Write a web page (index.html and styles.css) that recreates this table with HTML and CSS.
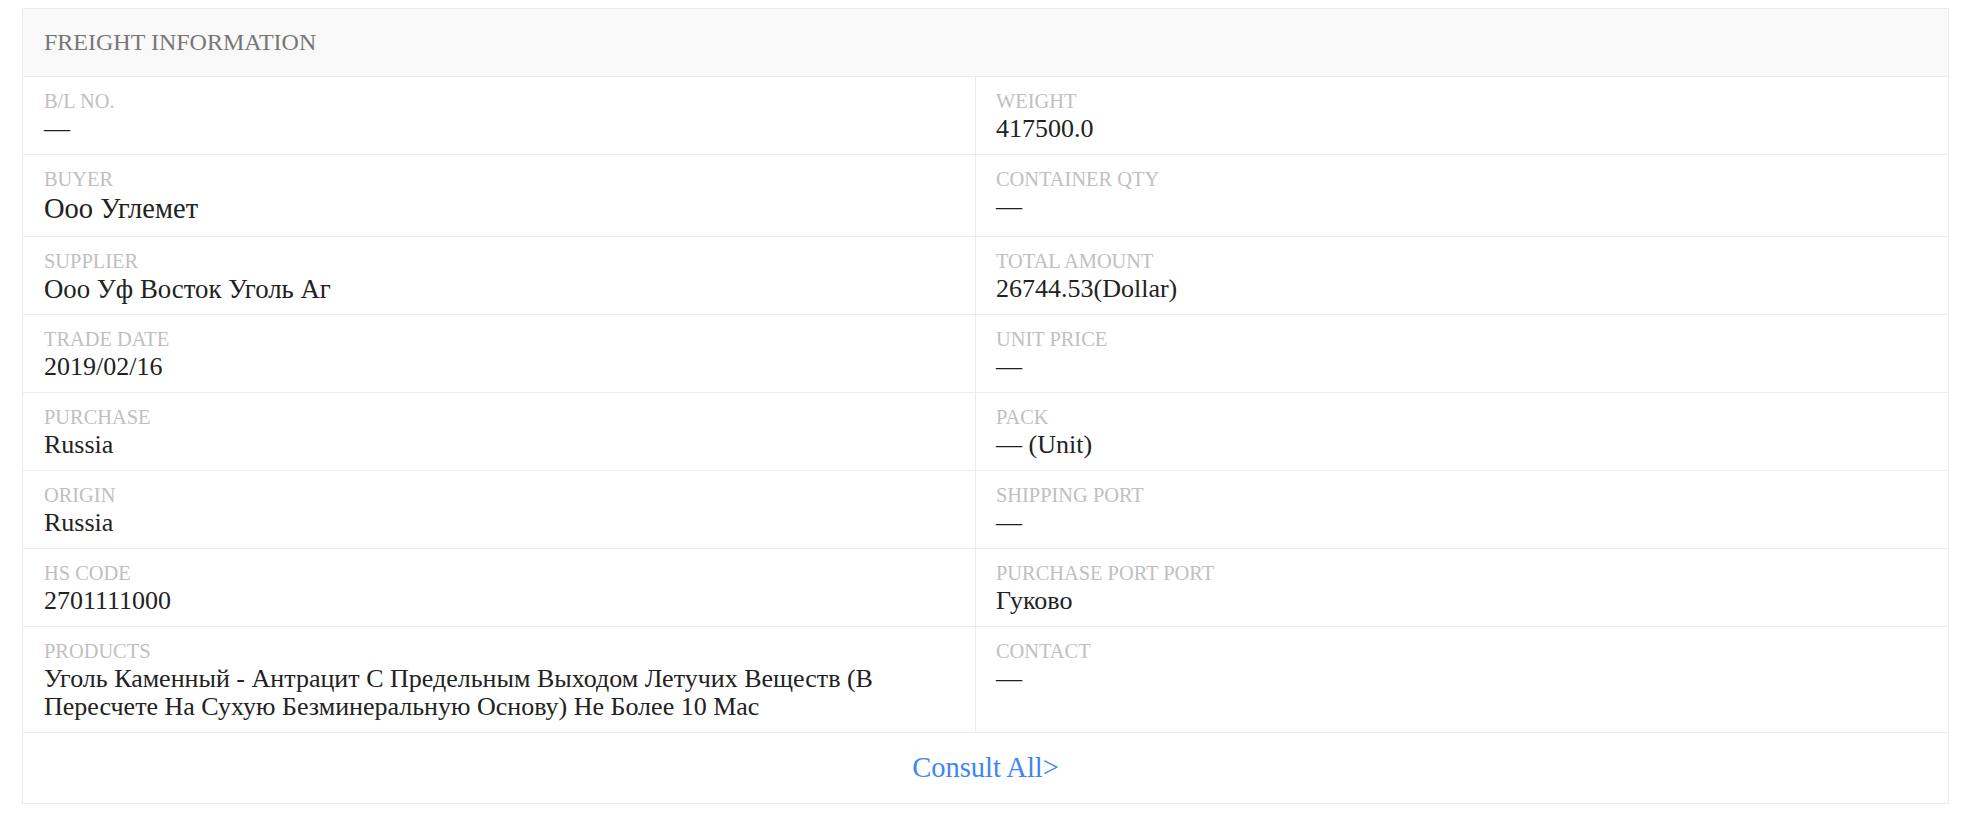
FILE: index.html
```html
<!DOCTYPE html>
<html lang="en">
<head>
<meta charset="utf-8">
<title>Freight Information</title>
<link rel="stylesheet" href="styles.css">
</head>
<body>
<div class="page">
  <section class="card">
    <header class="card-head">FREIGHT INFORMATION</header>
    <div class="grid">
      <div class="cell"><div class="label">B/L NO.</div><div class="value">—</div></div>
      <div class="cell"><div class="label">WEIGHT</div><div class="value">417500.0</div></div>
      <div class="cell"><div class="label">BUYER</div><div class="value value-lg">Ооо Углемет</div></div>
      <div class="cell"><div class="label">CONTAINER QTY</div><div class="value">—</div></div>
      <div class="cell"><div class="label">SUPPLIER</div><div class="value value-md">Ооо Уф Восток Уголь Аг</div></div>
      <div class="cell"><div class="label">TOTAL AMOUNT</div><div class="value">26744.53(Dollar)</div></div>
      <div class="cell"><div class="label">TRADE DATE</div><div class="value">2019/02/16</div></div>
      <div class="cell"><div class="label">UNIT PRICE</div><div class="value">—</div></div>
      <div class="cell"><div class="label">PURCHASE</div><div class="value">Russia</div></div>
      <div class="cell"><div class="label">PACK</div><div class="value">— (Unit)</div></div>
      <div class="cell"><div class="label">ORIGIN</div><div class="value">Russia</div></div>
      <div class="cell"><div class="label">SHIPPING PORT</div><div class="value">—</div></div>
      <div class="cell"><div class="label">HS CODE</div><div class="value">2701111000</div></div>
      <div class="cell"><div class="label">PURCHASE PORT PORT</div><div class="value">Гуково</div></div>
      <div class="cell"><div class="label">PRODUCTS</div><div class="value products">Уголь Каменный - Антрацит С Предельным Выходом Летучих Веществ (В Пересчете На Сухую Безминеральную Основу) Не Более 10 Мас</div></div>
      <div class="cell"><div class="label">CONTACT</div><div class="value">—</div></div>
    </div>
    <footer class="card-foot"><a class="consult" href="#">Consult All&gt;</a></footer>
  </section>
</div>
</body>
</html>
```

FILE: styles.css
```css
html, body {
  margin: 0;
  padding: 0;
  background: #ffffff;
}

body {
  font-family: "Liberation Serif", "Times New Roman", serif;
  color: #222222;
}

.page {
  padding: 8px 33px 0 22px;
}

.card {
  border: 1px solid #ebebeb;
  background: #ffffff;
}

.card-head {
  height: 67px;
  display: flex;
  align-items: center;
  padding-left: 21px;
  background: #f9f9f9;
  border-bottom: 1px solid #ebebeb;
  font-size: 24px;
  color: #777777;
}

.grid {
  display: grid;
  grid-template-columns: 952px 1fr;
}

.cell {
  padding: 12px 20px 11px 21px;
  border-bottom: 1px solid #ebebeb;
}

.cell:nth-child(even) {
  border-left: 1px solid #ebebeb;
  padding-left: 20px;
}

.label {
  font-size: 20.4px;
  line-height: 24px;
  margin-bottom: 2px;
  color: #c0c0c0;
}

.value {
  font-size: 26px;
  line-height: 28px;
  color: #222222;
}

.value-lg {
  font-size: 28.5px;
  line-height: 32px;
}

.value-md {
  font-size: 26.8px;
}

.value.products {
  max-width: 880px;
}

.card-foot {
  height: 70px;
  display: flex;
  align-items: center;
  justify-content: center;
}

.consult {
  font-size: 28.5px;
  color: #3e86f5;
  text-decoration: none;
}
```
